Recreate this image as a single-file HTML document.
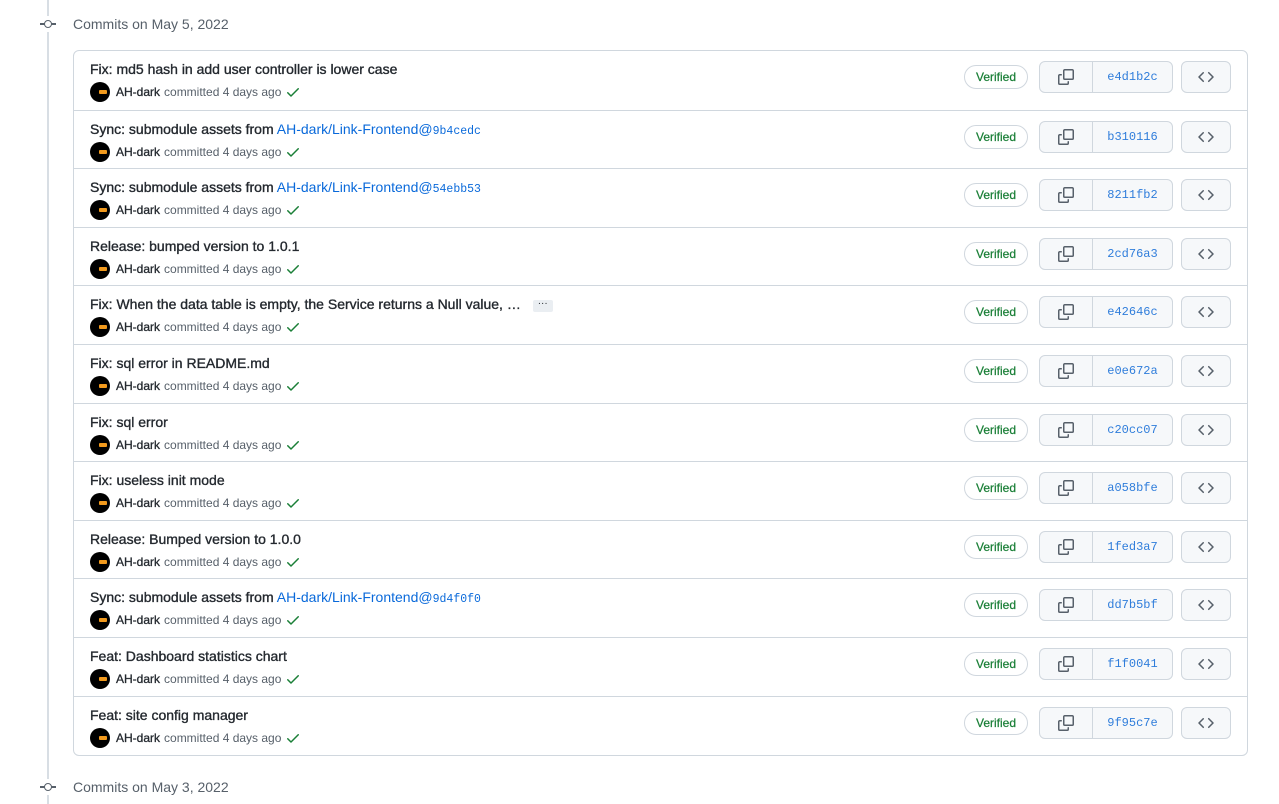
<!DOCTYPE html>
<html><head><meta charset="utf-8"><style>
*{box-sizing:border-box;margin:0;padding:0}
body{width:1279px;height:804px;background:#fff;font-family:"Liberation Sans",sans-serif;position:relative;overflow:hidden;color:#24292f}
.line{position:absolute;left:47px;top:0;width:2px;height:804px;background:#d8dee4}
.hdr{position:absolute;left:40px;height:16px;display:flex;align-items:center}
.hdr .ic{width:16px;height:16px;position:relative;background:#fff}
.hdr .ic:before{content:"";position:absolute;left:0;top:7px;width:16px;height:2px;background:#57606a}
.hdr .ic:after{content:"";position:absolute;left:4px;top:4px;width:8px;height:8px;border:1.5px solid #57606a;border-radius:50%;background:#fff;box-sizing:border-box}
.hdr span{margin-left:17px;font-size:14px;color:#57606a}
.box{position:absolute;left:73px;top:50px;width:1175px;height:706px;border:1px solid #d0d7de;border-radius:6px}
.row{position:absolute;left:0;width:100%;height:59px;border-top:1px solid #d0d7de}
.row:first-child{border-top:none}
.t{position:absolute;left:16px;top:10px;font-size:14px;color:#24292f;white-space:nowrap;-webkit-text-stroke:0.35px #24292f}
.t a{color:#0969da;-webkit-text-stroke:0}
.t code{font-family:"Liberation Mono",monospace;font-size:11.5px;color:#0969da;-webkit-text-stroke:0}
.dots{display:inline-block;background:#eaeef2;border-radius:2px;font-size:10px;padding:0 5px;height:12px;line-height:8px;vertical-align:middle;margin-left:8px;color:#24292f;-webkit-text-stroke:0}
.m{position:absolute;left:16px;top:31px;display:flex;align-items:center;font-size:12px;color:#57606a}
.av{width:20px;height:20px;border-radius:50%;background:#000;margin-right:6px;position:relative}
.av:after{content:"";position:absolute;left:9px;top:8px;width:8px;height:4px;background:#f29a1d;border-radius:1px}
.m b{color:#24292f;margin-right:4px;font-weight:normal;-webkit-text-stroke:0.3px #24292f}
.ck{margin-left:4px}
.v{position:absolute;left:890px;top:14px;width:64px;height:24px;border:1px solid #d0d7de;border-radius:12px;font-size:12px;color:#1a7f37;text-align:center;line-height:22px;-webkit-text-stroke:0.25px #1a7f37}
.g{position:absolute;left:965px;top:10px;width:134px;height:32px;border:1px solid #d0d7de;border-radius:6px;background:#f6f8fa;display:flex}
.g .c{width:53px;border-right:1px solid #d0d7de;display:flex;align-items:center;justify-content:center}
.g .h{flex:1;text-align:center;line-height:30px;font-family:"Liberation Mono",monospace;font-size:12px;color:#2f7ddb}
.b{position:absolute;left:1107px;top:10px;width:50px;height:32px;border:1px solid #d0d7de;border-radius:6px;background:#f6f8fa;display:flex;align-items:center;justify-content:center}
</style></head><body>
<div class="line"></div>
<div class="hdr" style="top:16px"><div class="ic"></div><span>Commits on May 5, 2022</span></div>
<div class="hdr" style="top:779px"><div class="ic"></div><span>Commits on May 3, 2022</span></div>
<div class="box" id="box"></div>
<script>
var rows=[
["Fix: md5 hash in add user controller is lower case","e4d1b2c"],
["Sync: submodule assets from <a>AH-dark/Link-Frontend</a><a>@</a><code>9b4cedc</code>","b310116"],
["Sync: submodule assets from <a>AH-dark/Link-Frontend</a><a>@</a><code>54ebb53</code>","8211fb2"],
["Release: bumped version to 1.0.1","2cd76a3"],
["Fix: When the data table is empty, the Service returns a Null value, … <span class='dots'>···</span>","e42646c"],
["Fix: sql error in README.md","e0e672a"],
["Fix: sql error","c20cc07"],
["Fix: useless init mode","a058bfe"],
["Release: Bumped version to 1.0.0","1fed3a7"],
["Sync: submodule assets from <a>AH-dark/Link-Frontend</a><a>@</a><code>9d4f0f0</code>","dd7b5bf"],
["Feat: Dashboard statistics chart","f1f0041"],
["Feat: site config manager","9f95c7e"]];
var h="";
var copy='<svg width="16" height="16" viewBox="0 0 16 16" fill="#57606a"><path d="M0 6.75C0 5.78.78 5 1.75 5h1.5a.75.75 0 010 1.5h-1.5a.25.25 0 00-.25.25v7.5c0 .14.11.25.25.25h7.5a.25.25 0 00.25-.25v-1.5a.75.75 0 011.5 0v1.5A1.75 1.75 0 019.25 16h-7.5A1.75 1.75 0 010 14.25v-7.5z"/><path d="M5 1.75C5 .78 5.78 0 6.75 0h7.5C15.22 0 16 .78 16 1.75v7.5A1.75 1.75 0 0114.25 11h-7.5A1.75 1.75 0 015 9.25v-7.5zm1.75-.25a.25.25 0 00-.25.25v7.5c0 .14.11.25.25.25h7.5a.25.25 0 00.25-.25v-7.5a.25.25 0 00-.25-.25h-7.5z"/></svg>';
var code='<svg width="16" height="16" viewBox="0 0 16 16" fill="#57606a"><path d="M4.72 3.22a.75.75 0 011.06 1.06L2.06 8l3.72 3.72a.75.75 0 11-1.06 1.06L.47 8.530a.75.75 0 010-1.06l4.25-4.25zm6.56 0a.75.75 0 10-1.06 1.06L13.94 8l-3.72 3.72a.75.75 0 101.06 1.06l4.25-4.25a.75.75 0 000-1.06l-4.25-4.25z"/></svg>';
var ck='<svg class="ck" width="16" height="16" viewBox="0 0 16 16" fill="#1a7f37"><path d="M13.78 4.22a.75.75 0 010 1.06l-7.25 7.25a.75.75 0 01-1.06 0L2.22 9.28a.75.75 0 011.06-1.06L6 10.94l6.72-6.72a.75.75 0 011.06 0z"/></svg>';
for(var i=0;i<rows.length;i++){
h+='<div class="row" style="top:'+(i*58.6).toFixed(1)+'px"><div class="t">'+rows[i][0]+'</div><div class="m"><div class="av"></div><b>AH-dark</b>committed 4 days ago'+ck+'</div><div class="v">Verified</div><div class="g"><div class="c">'+copy+'</div><div class="h">'+rows[i][1]+'</div></div><div class="b">'+code+'</div></div>';
}
document.getElementById("box").innerHTML=h;
</script>
</body></html>
